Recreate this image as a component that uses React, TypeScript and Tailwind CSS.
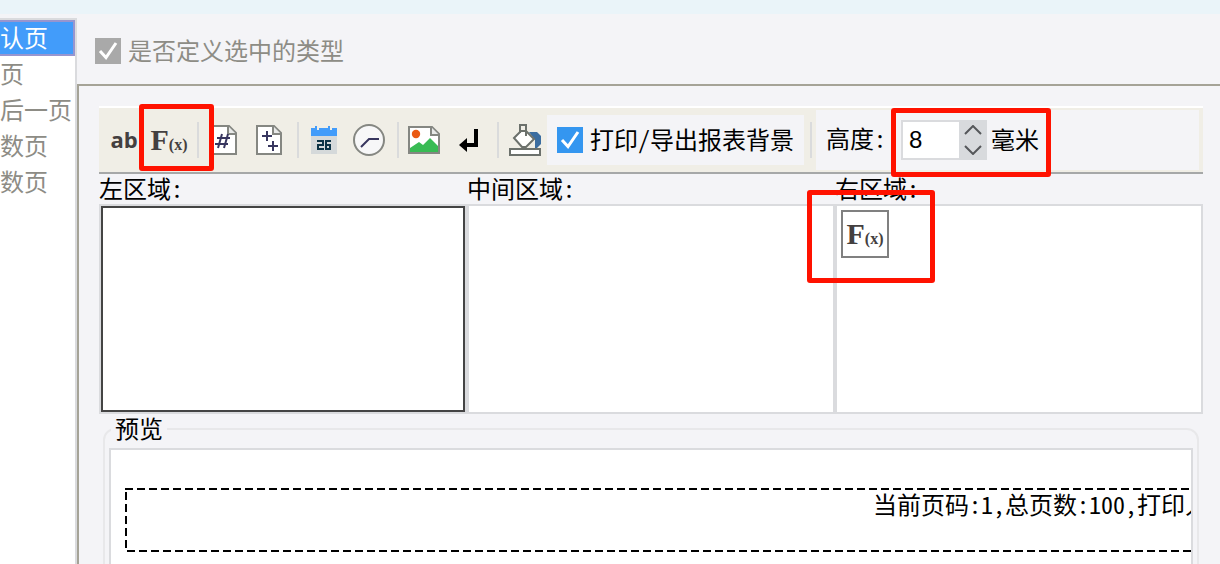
import { useState } from 'react';
import type { ReactNode } from 'react';

const pages = ['认页', '页', '后一页', '数页', '数页'];

function Separator() {
  return <div className="h-9 w-0.5 shrink-0 bg-[#dadbdc]" />;
}

function ToolGroup({ children }: { children: ReactNode }) {
  return <div className="flex h-full w-[98px] shrink-0 items-center gap-px pl-[3px]">{children}</div>;
}

function ToolButton({ label, children }: { label: string; children: ReactNode }) {
  return (
    <button type="button" aria-label={label} className="relative flex h-12 w-11 shrink-0 items-center justify-center">
      {children}
    </button>
  );
}

// 红色标注框
function Mark({ className }: { className: string }) {
  return <span className={`pointer-events-none absolute z-10 rounded-[3px] border-[5px] border-[#ff1200] ${className}`} />;
}

function FormulaText() {
  return (
    <span className="flex items-baseline font-['Liberation_Serif',serif] leading-none font-bold text-[#444040]">
      <span className="text-[30px]">F</span>
      <span className="text-base leading-none">(x)</span>
    </span>
  );
}

function PageIcon({ children }: { children: ReactNode }) {
  return (
    <svg width="26" height="30" viewBox="0 0 26 30" fill="none">
      <path d="M1 1H18L25 8V29H1Z" fill="#fff" stroke="#858782" strokeWidth="2" />
      <path d="M17 1V9H25" fill="#e8e9e8" stroke="#858782" strokeWidth="2" />
      {children}
    </svg>
  );
}

function CheckBox({ id, checked, disabled, onChange }: { id: string; checked: boolean; disabled?: boolean; onChange?: () => void }) {
  return (
    <span className="grid shrink-0">
      <input
        id={id}
        type="checkbox"
        checked={checked}
        disabled={disabled}
        onChange={onChange}
        readOnly={!onChange}
        className="col-start-1 row-start-1 size-[26px] appearance-none bg-white checked:bg-[#3496f0] disabled:bg-[#a9a9a9]"
      />
      {checked && (
        <svg className="pointer-events-none col-start-1 row-start-1" width="26" height="26" viewBox="0 0 26 26" fill="none">
          <path d="M5 13L11 19.5L21 5" stroke="#fff" strokeWidth="3" />
        </svg>
      )}
    </span>
  );
}

export default function App() {
  const [active, setActive] = useState(0);
  const [printBg, setPrintBg] = useState(true);
  const [height, setHeight] = useState(8);

  return (
    <div className="flex h-screen flex-col overflow-hidden bg-[#f4f4f7] font-['Noto_Sans_Mono_CJK_SC','Noto_Sans_CJK_SC',sans-serif] text-2xl leading-7 text-black">
      <div className="h-3.5 shrink-0 bg-[#eaf4f9]" />

      <div className="flex min-h-0 flex-1">
        {/* 左侧页列表 */}
        <nav className="mt-1 w-[77px] shrink-0 border-t-2 border-r-2 border-[#dadbde] bg-white">
          {pages.map((name, i) => (
            <button
              key={i}
              type="button"
              onClick={() => setActive(i)}
              className={`flex h-9 w-full items-center pb-0.5 whitespace-nowrap ${active === i ? 'border-y-2 border-r-2 border-[#9795cf] bg-[#429cfa] text-white' : 'text-[#8d8c85]'}`}
            >
              {name}
            </button>
          ))}
        </nav>

        <main className="flex min-w-0 flex-1 flex-col">
          <div className="flex h-[70px] shrink-0 items-center gap-[7px] pt-1 pl-[18px]">
            <CheckBox id="define-type" checked disabled />
            <label htmlFor="define-type" className="pb-0.5 text-[#8d8c85]">是否定义选中的类型</label>
          </div>

          <div className="flex-1 border-t-2 border-l-2 border-[#a5a397] pt-5 pr-[17px] pl-5">
            {/* 工具栏 */}
            <div className="flex h-[68px] items-center border-t-2 border-b-2 border-t-white border-b-[#a6a8a8] bg-[#f0eee6]">
              <ToolGroup>
                <ToolButton label="文本">
                  <span className="pb-0.5 font-['Open_Sans',sans-serif] text-[22px] leading-none font-bold text-[#444040]">ab</span>
                </ToolButton>
                <ToolButton label="公式">
                  <FormulaText />
                  <Mark className="-top-3 -left-2 h-[67px] w-[75px]" />
                </ToolButton>
              </ToolGroup>
              <Separator />
              <ToolGroup>
                <ToolButton label="页码">
                  <PageIcon>
                    <path d="M11 9L7 23M17 9L13 23M6 13H19M4 19H17" stroke="#38365f" strokeWidth="2" />
                  </PageIcon>
                </ToolButton>
                <ToolButton label="总页数">
                  <PageIcon>
                    <path d="M6 11H16M11 6V16M12 21H22M17 16V26" stroke="#38365f" strokeWidth="2" />
                  </PageIcon>
                </ToolButton>
              </ToolGroup>
              <Separator />
              <ToolGroup>
                <ToolButton label="日期">
                  <svg width="26" height="28" viewBox="0 0 26 28" fill="none">
                    <path d="M0 10H26V28H0Z" fill="#d5d9da" />
                    <path d="M0 2H4V0H6V4H8V2H17V0H19V4H21V2H26V10H0Z" fill="#429cfa" />
                    <path d="M6 15H12V19H7V23H13M20 15H15V23H19V19H15" stroke="#0d3446" strokeWidth="2" />
                  </svg>
                </ToolButton>
                <ToolButton label="时间">
                  <svg width="32" height="32" viewBox="0 0 32 32" fill="none">
                    <circle cx="16" cy="16" r="15" fill="#f7f7f8" stroke="#858782" strokeWidth="2" />
                    <path d="M26 15H16L8 23" stroke="#38365f" strokeWidth="2" />
                  </svg>
                </ToolButton>
              </ToolGroup>
              <Separator />
              <ToolGroup>
                <ToolButton label="图片">
                  <svg width="32" height="28" viewBox="0 0 32 28" fill="none">
                    <path d="M1 1H24L31 8V27H1Z" fill="#fff" stroke="#858782" strokeWidth="2" />
                    <path d="M23 1V9H31" fill="#e8e9e8" stroke="#858782" strokeWidth="2" />
                    <circle cx="8" cy="8" r="4.2" fill="#ea5a13" />
                    <path d="M2 26V22L11 16L15 19L22 12L30 20V26Z" fill="#38bb54" />
                  </svg>
                </ToolButton>
                <ToolButton label="换行">
                  <svg width="20" height="24" viewBox="0 0 20 24" fill="none">
                    <path d="M17 1V17H5" stroke="#000" strokeWidth="4" />
                    <path d="M0 17L8 10V24Z" fill="#000" />
                  </svg>
                </ToolButton>
              </ToolGroup>
              <Separator />
              <div className="flex w-12 shrink-0 items-center pl-1">
                <ToolButton label="背景">
                  <svg width="32" height="32" viewBox="0 0 32 32" fill="none">
                    <path d="M20 8H28L32 12V20L28 24H26V16Z" fill="#3b6da0" />
                    <path d="M5 14L12 7H17L25 15L17 23H13Z" fill="#fff" stroke="#6c716c" strokeWidth="2" />
                    <path d="M11 9V1H17V12" stroke="#6c716c" strokeWidth="2" />
                    <path d="M1 25H31V31H1Z" fill="#fff" stroke="#6c716c" strokeWidth="2" />
                  </svg>
                </ToolButton>
              </div>
              <div className="flex h-[50px] shrink-0 items-center gap-[7px] bg-[#f4f4f7] px-2.5">
                <CheckBox id="print-bg" checked={printBg} onChange={() => setPrintBg(!printBg)} />
                <label htmlFor="print-bg" className="pb-0.5 whitespace-nowrap">打印/导出报表背景</label>
              </div>
              <div className="ml-1.5">
                <Separator />
              </div>
              <div className="mr-1 ml-1 flex h-[60px] min-w-0 flex-1 items-center bg-[#f4f4f7] pl-2.5">
                <label htmlFor="height" className="w-[75px] shrink-0 pb-1 whitespace-nowrap">高度:</label>
                <div className="relative flex h-10 shrink-0 items-center">
                  <input
                    id="height"
                    type="text"
                    value={height}
                    onChange={e => setHeight(Number(e.target.value) || 0)}
                    className="h-10 w-[58px] border-2 border-r-0 border-[#dadbde] bg-white pl-1.5 font-['Liberation_Sans',sans-serif] outline-none"
                  />
                  <div className="flex h-10 w-7 flex-col bg-[#d8dadd]">
                    <button type="button" aria-label="增加" onClick={() => setHeight(height + 1)} className="flex flex-1 items-center justify-center">
                      <svg width="18" height="10" viewBox="0 0 18 10" fill="none">
                        <path d="M1 9L9 1L17 9" stroke="#55575a" strokeWidth="2" />
                      </svg>
                    </button>
                    <button type="button" aria-label="减少" onClick={() => setHeight(height - 1)} className="flex flex-1 items-center justify-center">
                      <svg width="18" height="10" viewBox="0 0 18 10" fill="none">
                        <path d="M1 1L9 9L17 1" stroke="#55575a" strokeWidth="2" />
                      </svg>
                    </button>
                  </div>
                  <span className="pb-0.5 pl-1">毫米</span>
                  <Mark className="-top-3 -left-2.5 h-[69px] w-40" />
                </div>
              </div>
            </div>

            {/* 左 / 中 / 右 区域 */}
            <div className="grid grid-cols-3">
              <div>
                <div className="h-[30px]">左区域:</div>
                <div className="h-[210px] border-2 border-[#dadbde] bg-white">
                  <div className="h-full border-2 border-[#444]" />
                </div>
              </div>
              <div>
                <div className="h-[30px]">中间区域:</div>
                <div className="h-[210px] border-2 border-[#dadbde] bg-white" />
              </div>
              <div>
                <div className="h-[30px]">右区域:</div>
                <div className="relative h-[210px] border-2 border-[#dadbde] bg-white p-1">
                  <button type="button" aria-label="公式" className="flex size-12 items-center justify-center border-2 border-[#808080]">
                    <FormulaText />
                  </button>
                  <Mark className="-top-4 -left-[30px] h-[93px] w-32" />
                </div>
              </div>
            </div>

            {/* 预览 */}
            <fieldset className="mx-1 rounded-xl border-2 border-[#e8e8ea] px-1">
              <legend className="ml-0.5 h-[30px] px-1">预览</legend>
              <div className="mt-1 h-40 overflow-hidden border-2 border-[#dadbde] bg-white pt-[38px] pl-3.5">
                <div className="h-0.5 bg-[repeating-linear-gradient(90deg,#000_0_8px,transparent_8px_12px)]" />
                <div className="flex h-[60px]">
                  <div className="my-0.5 w-0.5 bg-[repeating-linear-gradient(180deg,#000_0_8px,transparent_8px_12px)]" />
                  <div className="ml-auto w-[318px] overflow-hidden whitespace-nowrap">当前页码:1,总页数:100,打印人</div>
                </div>
                <div className="ml-0.5 h-0.5 bg-[repeating-linear-gradient(90deg,#000_0_8px,transparent_8px_12px)]" />
              </div>
            </fieldset>
          </div>
        </main>
      </div>
    </div>
  );
}
